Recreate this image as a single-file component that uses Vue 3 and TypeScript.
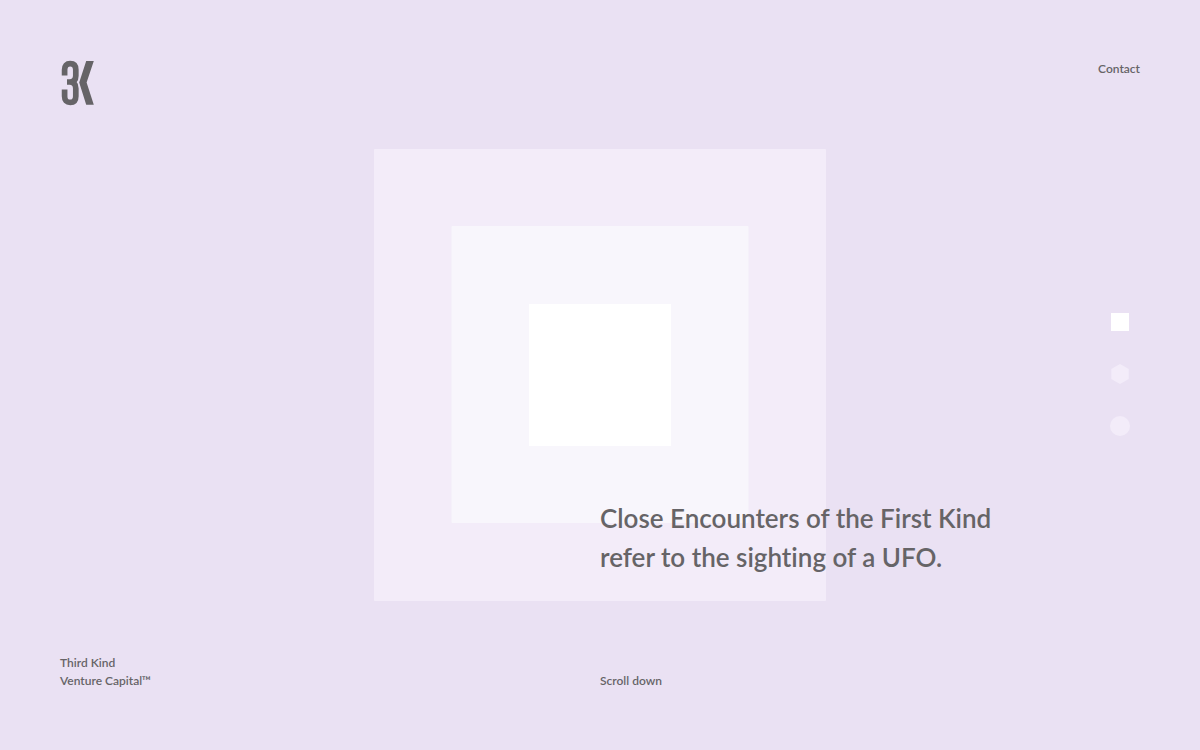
<script setup lang="ts">
import { ref } from 'vue'

type Shape = 'square' | 'hexagon' | 'circle'

const chapters: { shape: Shape; label: string }[] = [
  { shape: 'square', label: 'First kind' },
  { shape: 'hexagon', label: 'Second kind' },
  { shape: 'circle', label: 'Third kind' },
]
const active = ref(0)
</script>

<template>
  <main class="page">
    <svg class="art" viewBox="0 0 452 452" aria-hidden="true">
      <rect class="outer" width="452" height="452" rx="1" />
      <rect class="middle" x="77.5" y="77" width="297" height="297" rx="1" />
      <rect class="core" x="155" y="155" width="142" height="142" />
    </svg>

    <header class="top">
      <a class="logo" href="#" aria-label="Third Kind">
        <svg viewBox="0 0 36 46" width="36" height="46" aria-hidden="true">
          <path
            class="three"
            d="M4.6 15.5V9.8C4.6 5.6 6.6 3.6 10.2 3.6S15.8 5.6 15.8 9.8V15.8C15.8 20 13.7 22 9.6 22H7M7 22H9.6C13.7 22 15.8 24.2 15.8 28.4V36.2C15.8 40.4 13.8 42.4 10.2 42.4S4.6 40.4 4.6 36.2V29.5"
          />
          <path class="kay" d="M26.2 1H33.8L26.6 22.6L33.8 44.8H26.2L19.2 22.6Z" />
        </svg>
      </a>
      <a class="contact" href="#contact">Contact</a>
    </header>

    <h1 class="headline">
      Close Encounters of the First Kind<br />refer to the sighting of a UFO.
    </h1>

    <nav class="chapters" aria-label="Chapters">
      <button
        v-for="(chapter, i) in chapters"
        :key="chapter.shape"
        type="button"
        class="chapter"
        :class="{ active: i === active }"
        :aria-label="chapter.label"
        @click="active = i"
      >
        <svg viewBox="0 0 20 20" width="20" height="20" aria-hidden="true">
          <rect v-if="chapter.shape === 'square'" x="1" y="0" width="18" height="18" />
          <path v-else-if="chapter.shape === 'hexagon'" d="M10 -1L18.7 4V14L10 19L1.3 14V4Z" />
          <circle v-else cx="10" cy="9" r="10" />
        </svg>
      </button>
    </nav>

    <p class="company">Third Kind<br />Venture Capital™</p>
    <a class="scroll" href="#more">Scroll down</a>
  </main>
</template>

<style>
body {
  background: #eae1f3;
}
</style>

<style scoped>
.page {
  box-sizing: border-box;
  min-height: 100vh;
  padding: 60px;
  display: grid;
  grid-template-columns: 1fr 1fr;
  grid-template-rows: auto 1fr auto;
  background: #eae1f3;
  color: #666467;
  font-family: Lato, "Liberation Sans", sans-serif;
  font-size: 12px;
  font-weight: 600;
  font-variant-ligatures: none;
  line-height: 18px;
}
a {
  color: inherit;
  text-decoration: none;
}
.art {
  grid-area: 1 / 1 / -1 / -1;
  place-self: center;
  width: 452px;
  max-width: 100%;
}
.outer {
  fill: #f3ecf9;
}
.middle {
  fill: #f8f6fc;
}
.core {
  fill: #fff;
}
.top {
  grid-area: 1 / 1 / 2 / -1;
  display: flex;
  justify-content: space-between;
  align-items: flex-start;
}
.logo svg,
.chapter svg {
  display: block;
  overflow: visible;
}
.three {
  fill: none;
  stroke: #666467;
  stroke-width: 5.7;
}
.kay {
  fill: #666467;
}
.headline {
  grid-area: 2 / 2;
  align-self: end;
  margin: 0 0 77px;
  font-size: 26px;
  font-weight: 600;
  line-height: 39px;
}
.chapters {
  grid-area: 1 / 2 / -1 / -1;
  place-self: center end;
  display: grid;
  gap: 12px;
}
.chapter {
  padding: 10px;
  border: 0;
  background: none;
  cursor: pointer;
  fill: #f3ecf9;
}
.chapter.active {
  fill: #fff;
}
.company {
  grid-area: 3 / 1;
  margin: 0;
}
.scroll {
  grid-area: 3 / 2;
  place-self: end start;
}
</style>
